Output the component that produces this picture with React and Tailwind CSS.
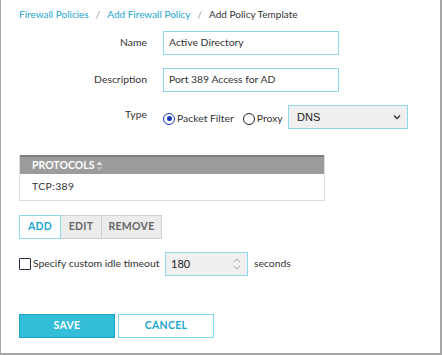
import React from "react";

const font = { fontFamily: 'Lato, "Open Sans", sans-serif' };

function Field({ label, children }) {
  return (
    <div className="flex items-center">
      <div className="w-[146px] text-right text-[10.4px] text-[#333]">{label}</div>
      <div className="ml-[16px] flex items-center">{children}</div>
    </div>
  );
}

function Radio({ checked }) {
  return (
    <span
      className={`flex h-[12px] w-[12px] shrink-0 items-center justify-center rounded-full border-[1.5px] ${
        checked ? "border-[#1537c2]" : "border-[#222]"
      }`}
    >
      {checked && <span className="h-[5px] w-[5px] rounded-full bg-[#1537c2]" />}
    </span>
  );
}

export default function App() {
  return (
    <div
      style={font}
      className="h-[355px] w-[442px] whitespace-nowrap border-b-2 border-l border-r-2 border-[#a6a6a6] bg-white"
    >
      {/* breadcrumb */}
      <div className="flex h-[31px] items-center pl-[18px] pb-[3px] text-[10px]">
        <span className="text-[#1ba6cc]">Firewall Policies</span>
        <span className="mx-[7px] text-[#999]">/</span>
        <span className="text-[#1ba6cc]">Add Firewall Policy</span>
        <span className="mx-[7px] text-[#999]">/</span>
        <span className="text-[#333]">Add Policy Template</span>
      </div>

      <div className="flex flex-col gap-[13px]">
        <Field label="Name">
          <div className="flex h-[24px] w-[176px] items-center border border-[#8fd9ea] px-[5px] text-[10.4px] text-[#333]">
            Active Directory
          </div>
        </Field>
        <Field label="Description">
          <div className="flex h-[24px] w-[176px] items-center border border-[#8fd9ea] px-[5px] text-[10.4px] text-[#333]">
            Port 389 Access for AD
          </div>
        </Field>
      </div>

      <div className="mt-[13px] flex items-center">
        <div className="w-[146px] pb-[4px] text-right text-[10.4px] text-[#333]">Type</div>
        <div className="ml-[16px] flex w-[125px] items-center pt-[4px] text-[10.4px] text-[#333]">
          <Radio checked />
          <span className="ml-[2px]">Packet Filter</span>
          <span className="ml-[9px]">
            <Radio />
          </span>
          <span className="ml-[2px]">Proxy</span>
        </div>
        <div className="flex h-[24px] w-[120px] items-center justify-between border border-[#8fd9ea] bg-[#efefef] pl-[8px] pr-[6px] text-[11px] text-[#222]">
          <span style={{ fontFamily: '"Liberation Sans", sans-serif' }}>DNS</span>
          <svg width="8" height="6" viewBox="0 0 8 6">
            <path d="M1 1.5 L4 4.5 L7 1.5" fill="none" stroke="#333" strokeWidth="1.3" />
          </svg>
        </div>
      </div>

      {/* protocols table */}
      <div className="ml-[18px] mt-[26px] w-[306px] border-b border-l border-r border-[#ddd]">
        <div className="flex h-[19px] items-center border-t-2 border-[#7e7e7e] bg-[#9c9c9c] pl-[12px] text-[10.5px] font-bold text-white">
          PROTOCOLS
          <svg className="ml-[2px]" width="7" height="10" viewBox="0 0 7 10">
            <path d="M3.5 0.5 L6.5 4 L0.5 4 Z" fill="#e8e8e8" />
            <path d="M3.5 9.5 L6.5 6 L0.5 6 Z" fill="#bdbdbd" />
          </svg>
        </div>
        <div className="flex h-[26px] items-center pl-[12px] text-[10.4px] tracking-[0.4px] text-[#333]">
          TCP:389
        </div>
      </div>

      {/* buttons */}
      <div className="ml-[18px] mt-[14px] flex h-[24px] text-[10.5px] font-bold tracking-[0.3px]">
        <div className="flex w-[42px] items-center justify-center border border-[#8fd9ea] bg-white text-[#1ba6cc]">
          ADD
        </div>
        <div className="flex w-[41px] items-center justify-center border-y border-r border-[#cfcfcf] bg-[#ececec] text-[#666]">
          EDIT
        </div>
        <div className="flex w-[60px] items-center justify-center border-y border-r border-[#cfcfcf] bg-[#ececec] text-[#666]">
          REMOVE
        </div>
      </div>

      {/* idle timeout */}
      <div className="ml-[18px] mt-[13px] flex items-center text-[10.4px] text-[#333]">
        <div className="flex w-[146px] items-center">
          <span className="h-[12px] w-[12px] shrink-0 rounded-[1px] border-[1.5px] border-[#2a2a4a]" />
          <span className="ml-[2px]">Specify custom idle timeout</span>
        </div>
        <div className="flex h-[24px] w-[83px] items-center justify-between border border-[#8fd9ea] bg-[#efefef] pl-[5px] pr-[5px] text-[11px] text-[#222]">
          <span>180</span>
          <svg width="10" height="14" viewBox="0 0 10 14">
            <path d="M2 5 L5 2 L8 5" fill="none" stroke="#aaa" strokeWidth="1" />
            <path d="M2 9 L5 12 L8 9" fill="none" stroke="#aaa" strokeWidth="1" />
          </svg>
        </div>
        <span className="ml-[6px]">seconds</span>
      </div>

      {/* save / cancel */}
      <div className="ml-[18px] mt-[38px] flex h-[24px] gap-[3px] text-[10.5px] font-bold tracking-[0.3px]">
        <div className="flex w-[96px] items-center justify-center border border-[#1aa7c6] bg-[#33bdd8] text-white">
          SAVE
        </div>
        <div className="flex w-[96px] items-center justify-center border border-[#7fd9ec] bg-white text-[#1ba6cc]">
          CANCEL
        </div>
      </div>
    </div>
  );
}
